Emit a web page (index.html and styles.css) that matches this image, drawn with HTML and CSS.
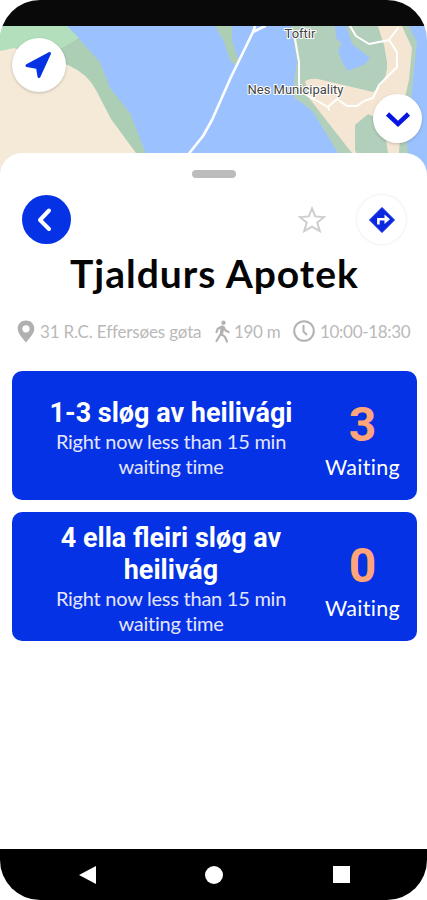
FILE: index.html
```html
<!DOCTYPE html>
<html lang="en">
<head>
  <meta charset="UTF-8">
  <meta name="viewport" content="width=device-width, initial-scale=1.0">
  <title>Tjaldurs Apotek</title>
  <link rel="stylesheet" href="styles.css">
</head>
<body>
  <div class="phone">
    <div class="status-bar"></div>
    <div class="map">
      <svg class="map-canvas" viewBox="0 26 427 154" width="427" height="154">
        <rect x="0" y="26" width="427" height="154" fill="#9cc1ff"/>
        <!-- west coast -->
        <path d="M0 26H67L80 40L100 62L110 88L130 113L147 156V180H0Z" fill="#abceb5"/>
        <path d="M0 26H67L79 38L62 48L40 50L0 52Z" fill="#b3dfbc"/>
        <path d="M0 51L14 48L50 60L68 65Q88 74 96 90L111 119L136 153L150 180H0Z" fill="#f5e9d7"/>
        <!-- east coast -->
        <path d="M215 26H232V40L239 62L236 66L230 60L224 42Z" fill="#abceb5"/>
        <path d="M291 26H409L417 42L411 100L405 122L408 153V180H350L338 153L313 112L302 103L294 98V82L297 62Z" fill="#b2cfbb"/>
        <path d="M305 81Q312 77 322 80L352 87L373 92Q388 82 387 62L384 45L378 26H402L412 48L409 80L402 110L399 153V180H366L352 153L330 125L309 98Z" fill="#f5e6d3"/>
        <path d="M355 125L368 114L383 121L388 153L370 180L355 150Z" fill="#b2cfbb"/>
        <path d="M335 26H346L352 44L370 58L365 64L348 71L342 62L338 50L342 44L336 38Z" fill="#9cc1ff"/>
        <g fill="none" stroke="#fff" stroke-linecap="round" stroke-linejoin="round">
          <path d="M187 156L203 136L212 120L231 77L253 32L265 26M253 32L255 26" stroke-width="2.6"/>
          <path d="M295 39L299 62V84L301 92L328 107L337 99L347 106H357L364 101L373 98L379 85L397 67V52L389 40L398 28M350 26L356 36L369 44L389 40M328 107L329 110" stroke-width="2"/>
        </g>
        <g class="map-labels">
          <text x="300" y="38">Toftir</text>
          <text x="295.500" y="94">Nes Municipality</text>
        </g>
      </svg>
      <button class="map-btn locate-btn" aria-label="My location">
        <svg viewBox="0 0 30 30" width="30" height="30"><path d="M25.500 3.500L15 26.500L13.500 17.500L3 15.500Z" fill="#0432e4" stroke="#0432e4" stroke-width="3" stroke-linejoin="round"/></svg>
      </button>
      <button class="map-btn collapse-btn" aria-label="Collapse">
        <svg viewBox="0 0 28 18" width="28" height="18"><path d="M3.500 4L14 14L24.500 4" fill="none" stroke="#0615e2" stroke-width="4.500"/></svg>
      </button>
    </div>
    <main class="sheet">
      <div class="handle"></div>
      <div class="toolbar">
        <button class="back-btn" aria-label="Back">
          <svg viewBox="0 0 20 26" width="20" height="26"><path d="M14 3.500L5 13L14 22" fill="none" stroke="#fff" stroke-width="4" stroke-linecap="round" stroke-linejoin="round"/></svg>
        </button>
        <div class="toolbar-right">
          <svg class="star" viewBox="0 0 28 28" width="28" height="28"><path d="M14 2.500L17.200 10.400L26 11L19.300 16.500L21.800 25.200L14 20.700L6.200 25.200L8.700 16.500L2 11L10.800 10.400Z" fill="none" stroke="#cecece" stroke-width="2"/></svg>
          <button class="route-btn" aria-label="Directions">
            <svg viewBox="0 0 28 28" width="28" height="28">
              <path d="M14 1.500L26.500 14L14 26.500L1.500 14Z" fill="#0928df" stroke="#0928df" stroke-linejoin="round"/>
              <path d="M10.400 18.500V13.300H17" fill="none" stroke="#fff" stroke-width="2.600"/>
              <path d="M16.500 8.500L22 13.300L16.500 18Z" fill="#fff"/>
            </svg>
          </button>
        </div>
      </div>
      <h1 class="title">Tjaldurs Apotek</h1>
      <div class="details">
        <span class="detail address">
          <svg viewBox="0 0 18 23" width="18" height="23"><path fill-rule="evenodd" d="M9 .5C4.200 .5 .7 4 .7 8.500C.7 14 6 18.500 9 22.500C12 18.500 17.300 14 17.300 8.500C17.300 4 13.800 .5 9 .5ZM9 5.200A3.600 3.600 0 1 1 9 12.400A3.600 3.600 0 1 1 9 5.200Z" fill="#b0b0b0"/></svg>
          <span>31 R.C. Effersøes gøta</span>
        </span>
        <span class="detail distance">
          <svg viewBox="0 0 16 23" width="16" height="23">
            <circle cx="9.500" cy="2.700" r="2.200" fill="#b3b3b3"/>
            <path d="M8.500 7L6.700 14L2.500 21M7.500 14L11 17L13 21.500M8 6.500L3.800 8.700L2.500 12M9.500 7L11.500 10.500L14.500 12" fill="none" stroke="#b3b3b3" stroke-width="2.200" stroke-linecap="round" stroke-linejoin="round"/>
            <path d="M6.500 6.500L10 6L10.500 8L9 14H6Z" fill="#b3b3b3"/>
          </svg>
          <span>190 m</span>
        </span>
        <span class="detail hours">
          <svg viewBox="0 0 22 22" width="22" height="22"><circle cx="11" cy="11" r="9.800" fill="none" stroke="#b3b3b3" stroke-width="2"/><path d="M10.500 5V11.500L14 15" fill="none" stroke="#b3b3b3" stroke-width="2"/></svg>
          <span>10:00-18:30</span>
        </span>
      </div>
      <div class="queues">
        <section class="queue">
          <div class="queue-info">
            <h2>1-3 sløg av heilivági</h2>
            <p>Right now less than 15 min<br>waiting time</p>
          </div>
          <div class="queue-count">
            <strong>3</strong>
            <span>Waiting</span>
          </div>
        </section>
        <section class="queue">
          <div class="queue-info">
            <h2>4 ella fleiri sløg av<br>heilivág</h2>
            <p>Right now less than 15 min<br>waiting time</p>
          </div>
          <div class="queue-count">
            <strong>0</strong>
            <span>Waiting</span>
          </div>
        </section>
      </div>
    </main>
    <nav class="nav-bar">
      <svg viewBox="0 0 18 20" width="18" height="20"><path d="M0 10L17 1V19Z" fill="#fff"/></svg>
      <span class="nav-home"></span>
      <span class="nav-recent"></span>
    </nav>
  </div>
</body>
</html>
```
FILE: styles.css
```css
* {
  box-sizing: border-box;
}
body {
  margin: 0;
  background: #fff;
  font-family: Lato, "Open Sans", sans-serif;
}
button {
  border: none;
  padding: 0;
  display: flex;
  align-items: center;
  justify-content: center;
  border-radius: 50%;
}
svg {
  display: block;
  flex-shrink: 0;
}
.phone {
  width: 427px;
  height: 900px;
  border-radius: 40px;
  overflow: hidden;
  display: flex;
  flex-direction: column;
}
.status-bar {
  height: 26px;
  background: #090909;
  flex-shrink: 0;
}

/* Map */
.map {
  position: relative;
  height: 127px;
  flex-shrink: 0;
}
.map-labels {
  font-family: Roboto, sans-serif;
  font-size: 13px;
  text-anchor: middle;
  fill: #444;
  stroke: #fff;
  stroke-width: 2px;
  paint-order: stroke;
}
.map-btn {
  position: absolute;
  background: #fff;
  box-shadow: 0 1px 3px rgba(0, 0, 0, 0.2);
}
.locate-btn {
  width: 54px;
  height: 54px;
  left: 12px;
  top: 12px;
}
.collapse-btn {
  width: 49px;
  height: 49px;
  left: 373px;
  top: 68px;
}

/* Bottom sheet */
.sheet {
  position: relative;
  flex: 1;
  background: #fff;
  border-radius: 22px 22px 0 0;
  padding: 17px 10px 0 12px;
}
.handle {
  width: 44px;
  height: 8px;
  margin: 0 0 0 180px;
  border-radius: 4px;
  background: #bcbcbc;
}
.toolbar {
  display: flex;
  justify-content: space-between;
  align-items: center;
  margin-top: 17px;
  padding: 0 11px 0 10px;
}
.back-btn {
  width: 49px;
  height: 49px;
  background: #0432e4;
  padding-right: 4px;
}
.toolbar-right {
  display: flex;
  align-items: center;
  gap: 31px;
}
.route-btn {
  width: 49px;
  height: 49px;
  background: #fff;
  box-shadow: 0 0 3px rgba(0, 0, 0, 0.12);
}
.title {
  margin: 5px 0 0;
  height: 48px;
  line-height: 48px;
  font-size: 39px;
  font-weight: 700;
  letter-spacing: 1px;
  text-align: center;
  white-space: nowrap;
  color: #050505;
}
.details {
  display: flex;
  align-items: center;
  height: 24px;
  margin-top: 22px;
  padding-left: 5px;
  font-size: 17px;
  letter-spacing: -0.3px;
  color: #b9b9b9;
  white-space: nowrap;
}
.detail {
  display: flex;
  align-items: center;
  gap: 5px;
}
.address {
  width: 197px;
  letter-spacing: -0.15px;
}
.distance {
  width: 79px;
  gap: 4px;
}

/* Queue cards */
.queues {
  display: flex;
  flex-direction: column;
  gap: 12px;
  margin-top: 28px;
}
.queue {
  display: flex;
  align-items: center;
  height: 129px;
  border-radius: 10px;
  background: #0432e4;
  color: #fff;
  text-align: center;
}
.queue-info {
  width: 318px;
  padding-top: 5px;
}
.queue h2 {
  margin: 0;
  font: 700 27px/32px Roboto, sans-serif;
}
.queue p {
  margin: 0;
  font-size: 20px;
  line-height: 25px;
  letter-spacing: -0.25px;
  color: #e4e5ff;
}
.queue-count {
  width: 65px;
  padding-top: 7px;
  display: flex;
  flex-direction: column;
  align-items: center;
}
.queue-count strong {
  font: 700 48px/56px Roboto, sans-serif;
  color: #ffa579;
}
.queue-count span {
  font-size: 21.5px;
  line-height: 28px;
  letter-spacing: 0.3px;
}

/* Android navigation */
.nav-bar {
  display: flex;
  align-items: center;
  justify-content: space-between;
  height: 51px;
  flex-shrink: 0;
  padding: 0 77px 0 79px;
  background: #000;
}
.nav-home {
  width: 18px;
  height: 18px;
  margin-right: 2px;
  border-radius: 50%;
  background: #fff;
}
.nav-recent {
  width: 17px;
  height: 17px;
  background: #fff;
}
```
